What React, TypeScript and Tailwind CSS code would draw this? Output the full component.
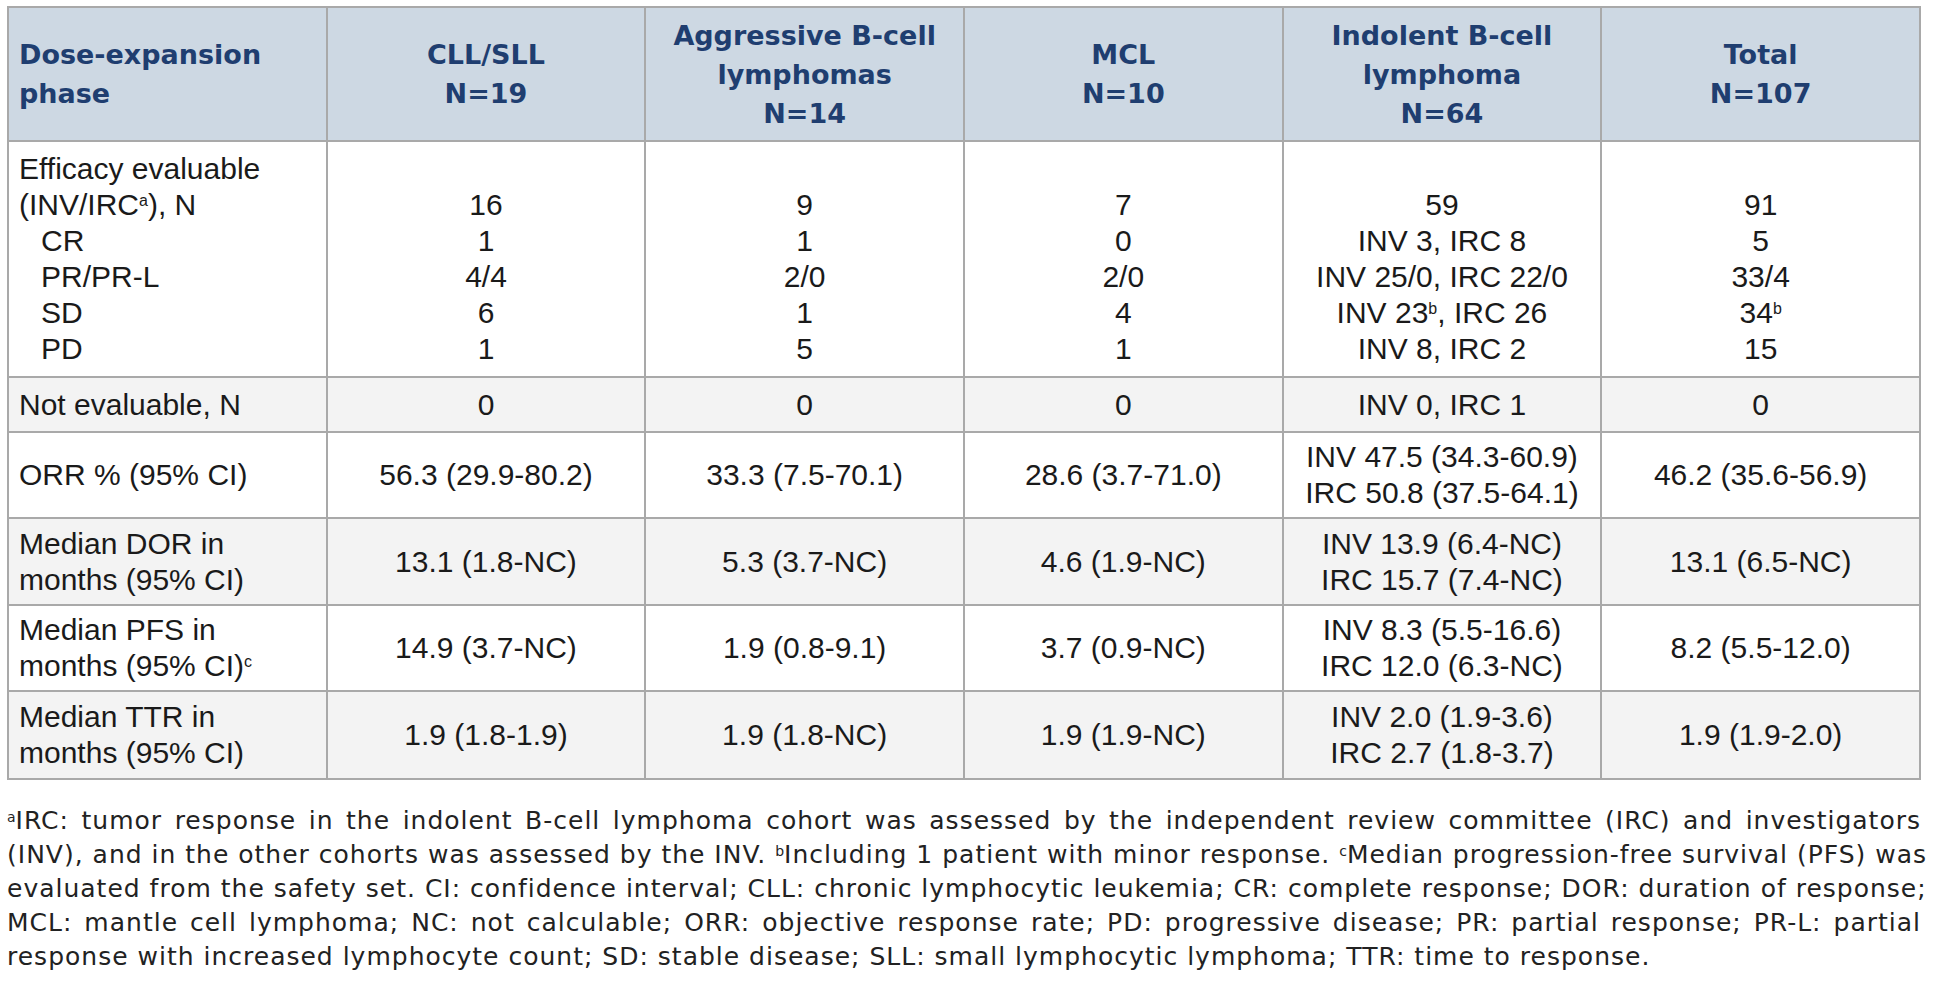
const headers = [
  { lines: ['Dose-expansion', 'phase'], left: true },
  { lines: ['CLL/SLL', 'N=19'] },
  { lines: ['Aggressive B-cell', 'lymphomas', 'N=14'] },
  { lines: ['MCL', 'N=10'] },
  { lines: ['Indolent B-cell', 'lymphoma', 'N=64'] },
  { lines: ['Total', 'N=107'] },
]

type Cell = React.ReactNode[]

const Sup = ({ children }: { children: React.ReactNode }) => (
  <sup className="top-[-0.55em] text-[16px]">{children}</sup>
)

const efficacy: Cell[] = [
  ['16', '1', '4/4', '6', '1'],
  ['9', '1', '2/0', '1', '5'],
  ['7', '0', '2/0', '4', '1'],
  [
    '59',
    'INV 3, IRC 8',
    'INV 25/0, IRC 22/0',
    <>
      INV 23<Sup>b</Sup>, IRC 26
    </>,
    'INV 8, IRC 2',
  ],
  [
    '91',
    '5',
    '33/4',
    <>
      34<Sup>b</Sup>
    </>,
    '15',
  ],
]

const rows: { label: React.ReactNode[]; cells: Cell[]; h: string; shade: boolean }[] = [
  {
    label: ['Not evaluable, N'],
    cells: [['0'], ['0'], ['0'], ['INV 0, IRC 1'], ['0']],
    h: 'h-[55px]',
    shade: true,
  },
  {
    label: ['ORR % (95% CI)'],
    cells: [
      ['56.3 (29.9-80.2)'],
      ['33.3 (7.5-70.1)'],
      ['28.6 (3.7-71.0)'],
      ['INV 47.5 (34.3-60.9)', 'IRC 50.8 (37.5-64.1)'],
      ['46.2 (35.6-56.9)'],
    ],
    h: 'h-[86px]',
    shade: false,
  },
  {
    label: ['Median DOR in', 'months (95% CI)'],
    cells: [
      ['13.1 (1.8-NC)'],
      ['5.3 (3.7-NC)'],
      ['4.6 (1.9-NC)'],
      ['INV 13.9 (6.4-NC)', 'IRC 15.7 (7.4-NC)'],
      ['13.1 (6.5-NC)'],
    ],
    h: 'h-[87px]',
    shade: true,
  },
  {
    label: [
      'Median PFS in',
      <>
        months (95% CI)<Sup>c</Sup>
      </>,
    ],
    cells: [
      ['14.9 (3.7-NC)'],
      ['1.9 (0.8-9.1)'],
      ['3.7 (0.9-NC)'],
      ['INV 8.3 (5.5-16.6)', 'IRC 12.0 (6.3-NC)'],
      ['8.2 (5.5-12.0)'],
    ],
    h: 'h-[86px]',
    shade: false,
  },
  {
    label: ['Median TTR in', 'months (95% CI)'],
    cells: [
      ['1.9 (1.8-1.9)'],
      ['1.9 (1.8-NC)'],
      ['1.9 (1.9-NC)'],
      ['INV 2.0 (1.9-3.6)', 'IRC 2.7 (1.8-3.7)'],
      ['1.9 (1.9-2.0)'],
    ],
    h: 'h-[88px]',
    shade: true,
  },
]

function Lines({ lines }: { lines: React.ReactNode[] }) {
  return (
    <>
      {lines.map((l, i) => (
        <div key={i}>{l}</div>
      ))}
    </>
  )
}

const FSup = ({ children }: { children: React.ReactNode }) => (
  <sup className="top-[-0.5em] text-[14px] tracking-normal">{children}</sup>
)

// footnote lines are broken where the source breaks them
const footnote: React.ReactNode[] = [
  <>
    <FSup>a</FSup>IRC: tumor response in the indolent B-cell lymphoma cohort was assessed by the
    independent review committee (IRC) and investigators
  </>,
  <>
    (INV), and in the other cohorts was assessed by the INV. <FSup>b</FSup>Including 1 patient with
    minor response. <FSup>c</FSup>Median progression-free survival (PFS) was
  </>,
  <>
    evaluated from the safety set. CI: confidence interval; CLL: chronic lymphocytic leukemia; CR:
    complete response; DOR: duration of response;
  </>,
  <>
    MCL: mantle cell lymphoma; NC: not calculable; ORR: objective response rate; PD: progressive
    disease; PR: partial response; PR-L: partial
  </>,
]

export default function App() {
  return (
    <div className="min-h-screen bg-white pl-[7px] pr-[12px] pt-[6px] text-[#1a1a1a]">
      <table className="w-[1914px] table-fixed border-collapse font-['Liberation_Sans',Arial,sans-serif] text-[30px] leading-[36px]">
        <thead>
          <tr className="h-[134px] bg-[#cdd8e3]">
            {headers.map((h, i) => (
              <th
                key={i}
                className={`border-2 border-[#a9a9a9] px-[10px] align-middle font-['DejaVu_Sans',sans-serif] text-[27px] font-bold leading-[39px] text-[#1f3e70] ${
                  h.left ? 'text-left' : 'text-center'
                }`}
              >
                <Lines lines={h.lines} />
              </th>
            ))}
          </tr>
        </thead>
        <tbody>
          <tr className="h-[236px] bg-white">
            <td className="border-2 border-[#a9a9a9] px-[10px] pb-[8px] pt-[9px] align-top">
              <div>Efficacy evaluable</div>
              <div>
                (INV/IRC<Sup>a</Sup>), N
              </div>
              <div className="pl-[22px]">CR</div>
              <div className="pl-[22px]">PR/PR-L</div>
              <div className="pl-[22px]">SD</div>
              <div className="pl-[22px]">PD</div>
            </td>
            {efficacy.map((c, i) => (
              <td
                key={i}
                className="border-2 border-[#a9a9a9] px-[10px] pb-[8px] pt-[9px] text-center align-top"
              >
                <div>&nbsp;</div>
                <Lines lines={c} />
              </td>
            ))}
          </tr>
          {rows.map((r, ri) => (
            <tr key={ri} className={`${r.h} ${r.shade ? 'bg-[#f3f3f3]' : 'bg-white'}`}>
              <td className="border-2 border-[#a9a9a9] px-[10px] align-middle">
                <Lines lines={r.label} />
              </td>
              {r.cells.map((c, ci) => (
                <td
                  key={ci}
                  className="border-2 border-[#a9a9a9] px-[10px] text-center align-middle"
                >
                  <Lines lines={c} />
                </td>
              ))}
            </tr>
          ))}
        </tbody>
      </table>

      <div className="mt-[24px] w-[1914px] font-['DejaVu_Sans',sans-serif] text-[25px] leading-[34px] tracking-[1px] text-[#222]">
        {footnote.map((l, i) => (
          <div key={i} className="whitespace-nowrap text-justify [text-align-last:justify]">
            {l}
          </div>
        ))}
        <div className="whitespace-nowrap">
          response with increased lymphocyte count; SD: stable disease; SLL: small lymphocytic
          lymphoma; TTR: time to response.
        </div>
      </div>
    </div>
  )
}
